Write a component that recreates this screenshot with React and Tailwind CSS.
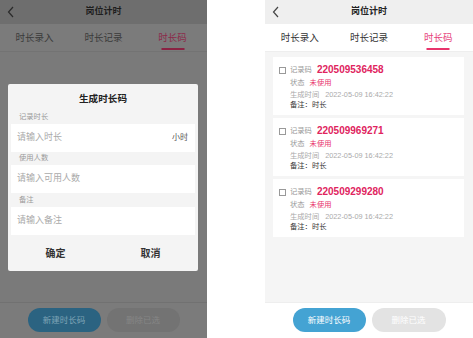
import React from 'react';

const font = { fontFamily: '"Liberation Sans", "Noto Sans CJK SC", sans-serif' };

const Chevron = ({ color }) => (
  <svg width="8" height="12" viewBox="0 0 8 12" className="absolute left-[7px] top-[6px]">
    <polyline points="6,1 1.5,6 6,11" fill="none" stroke={color} strokeWidth="1.2" />
  </svg>
);

const tabs = ['时长录入', '时长记录', '时长码'];

const Tabs = ({ dark }) => (
  <div className={`flex h-[28px] ${dark ? 'bg-[#7b7b7b] border-b border-[#737373]' : 'bg-white border-b border-[#eeeeee]'}`}>
    {tabs.map((t, i) => (
      <div key={t} className="flex-1 relative flex items-center justify-center">
        <span
          className={`text-[9.5px] leading-none ${
            i === 2 ? (dark ? 'text-[#8c2a4a]' : 'text-[#e6427a]') : dark ? 'text-[#3a3a3a]' : 'text-[#333333]'
          }`}
        >
          {t}
        </span>
        {i === 2 && (
          <div className={`absolute bottom-[1px] left-1/2 -translate-x-1/2 w-[23px] h-[2px] ${dark ? 'bg-[#8a2343]' : 'bg-[#e8336b]'}`} />
        )}
      </div>
    ))}
  </div>
);

const codes = ['220509536458', '220509969271', '220509299280'];

const Card = ({ code }) => (
  <div className="bg-white h-[58px] px-[6px] pt-[6px]">
    <div className="flex items-center leading-[14px]">
      <span className="w-[7px] h-[7px] border border-[#999999] mr-[4px]" />
      <span className="text-[7.3px] text-[#999999]">记录码</span>
      <span className="ml-[5px] text-[10px] font-bold text-[#e0245e]">{code}</span>
    </div>
    <div className="pl-[11px] leading-[12px] text-[7.3px]">
      <span className="text-[#999999]">状态</span>
      <span className="ml-[5px] text-[#e8336b]">未使用</span>
    </div>
    <div className="pl-[11px] leading-[11px] text-[7.3px] text-[#aaaaaa]">
      <span>生成时间</span>
      <span className="ml-[6px]">2022-05-09 16:42:22</span>
    </div>
    <div className="pl-[11px] leading-[9px] text-[7.3px] text-[#333333]">备注：时长</div>
  </div>
);

const Field = ({ label, placeholder, unit }) => (
  <>
    <div className="h-[14px] pl-[11px] flex items-center text-[7.3px] text-[#9a9a9a]">{label}</div>
    <div className="mx-[3px] h-[28px] bg-white flex items-center justify-between pl-[6px] pr-[7px]">
      <span className="text-[9px] text-[#aaaaaa]">{placeholder}</span>
      {unit && <span className="text-[8px] text-[#555555]">{unit}</span>}
    </div>
  </>
);

const App = () => {
  return (
    <div className="w-[473px] h-[338px] flex bg-white overflow-hidden" style={font}>
      {/* left: dialog open */}
      <div className="w-[207px] h-full flex flex-col bg-[#7a7a7a] relative">
        <div className="h-[24px] bg-[#6e6e6e] relative flex items-center justify-center">
          <Chevron color="#2a2a2a" />
          <span className="text-[9px] font-bold text-[#1e1e1e]">岗位计时</span>
        </div>
        <Tabs dark />
        <div className="flex-1" />
        <div className="h-[36px] bg-[#7b7b7b] border-t border-[#717171] flex justify-center gap-[6px] pt-[5px]">
          <div className="w-[73px] h-[24px] rounded-full bg-[#2b6381] flex items-center justify-center text-[8.5px] text-[#7fa4b6]">新建时长码</div>
          <div className="w-[73px] h-[24px] rounded-full bg-[#737373] flex items-center justify-center text-[8.5px] text-[#868686]">删除已选</div>
        </div>

        <div className="absolute left-[8px] top-[84px] w-[190px] h-[187px] bg-[#f4f4f4] rounded-[2px] flex flex-col">
          <div className="h-[26px] pt-[8px] text-center text-[9.6px] font-bold text-[#222222] leading-[14px]">生成时长码</div>
          <Field label="记录时长" placeholder="请输入时长" unit="小时" />
          <div className="h-[13px] pl-[11px] flex items-center text-[7.3px] text-[#9a9a9a]">使用人数</div>
          <div className="mx-[3px] h-[28px] bg-white flex items-center pl-[6px]">
            <span className="text-[9px] text-[#aaaaaa]">请输入可用人数</span>
          </div>
          <Field label="备注" placeholder="请输入备注" />
          <div className="flex-1 flex">
            <div className="flex-1 flex items-center justify-center text-[10px] font-bold text-[#333333]">确定</div>
            <div className="flex-1 flex items-center justify-center text-[10px] font-bold text-[#333333]">取消</div>
          </div>
        </div>
      </div>

      <div className="w-[58px]" />

      {/* right: list */}
      <div className="w-[208px] h-full flex flex-col bg-[#f5f5f5]">
        <div className="h-[24px] bg-[#efefef] relative flex items-center justify-center">
          <Chevron color="#444444" />
          <span className="text-[9px] font-bold text-[#222222]">岗位计时</span>
        </div>
        <Tabs />
        <div className="flex-1 pt-[5px] pl-[8px] pr-[9px] flex flex-col gap-[3px]">
          {codes.map((c) => (
            <Card key={c} code={c} />
          ))}
        </div>
        <div className="h-[36px] bg-white border-t border-[#eeeeee] flex justify-center gap-[6px] pt-[5px]">
          <div className="w-[73px] h-[24px] rounded-full bg-[#44a3d3] flex items-center justify-center text-[8.5px] text-white">新建时长码</div>
          <div className="w-[74px] h-[24px] rounded-full bg-[#e3e3e3] flex items-center justify-center text-[8.5px] text-white">删除已选</div>
        </div>
      </div>
    </div>
  );
};

export default App;
